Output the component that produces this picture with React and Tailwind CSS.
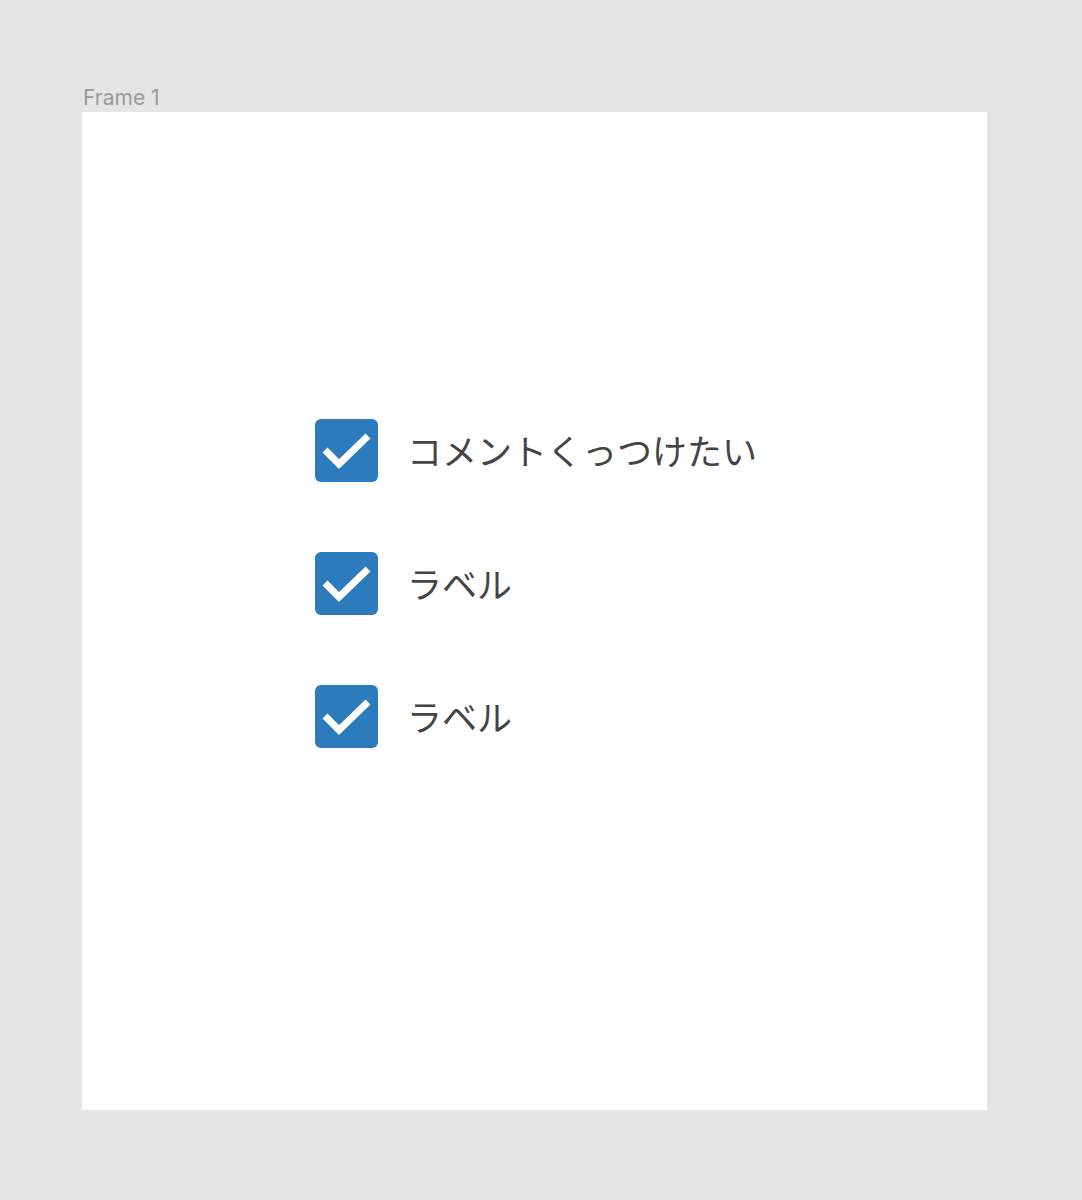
import React from 'react';

const items = ['コメントくっつけたい', 'ラベル', 'ラベル'];

const CheckBox = () => (
  <div className="w-[63px] h-[63px] rounded-[6px] bg-[#2c7bbd] shrink-0">
    <svg viewBox="0 0 63 63" className="w-full h-full">
      <path d="M10 31 L24 45 L53 17" fill="none" stroke="#ffffff" strokeWidth="7" />
    </svg>
  </div>
);

const App = () => {
  return (
    <div className="min-h-screen bg-[#e5e5e5] pt-[83px] pl-[82px] font-['Inter','Noto_Sans_CJK_JP',sans-serif]">
      <div className="text-[21px] leading-[29px] text-[#9a9a9a] pl-[1px]">Frame 1</div>
      <div className="w-[905px] h-[998px] bg-white pt-[307px] pl-[233px]">
        <div className="flex flex-col gap-[70px]">
          {items.map((label, i) => (
            <div key={i} className="flex items-center gap-[29px] h-[63px]">
              <CheckBox />
              <span className="text-[35px] text-[#444444] font-['Noto_Sans_CJK_JP',sans-serif]">{label}</span>
            </div>
          ))}
        </div>
      </div>
    </div>
  );
};

export default App;
